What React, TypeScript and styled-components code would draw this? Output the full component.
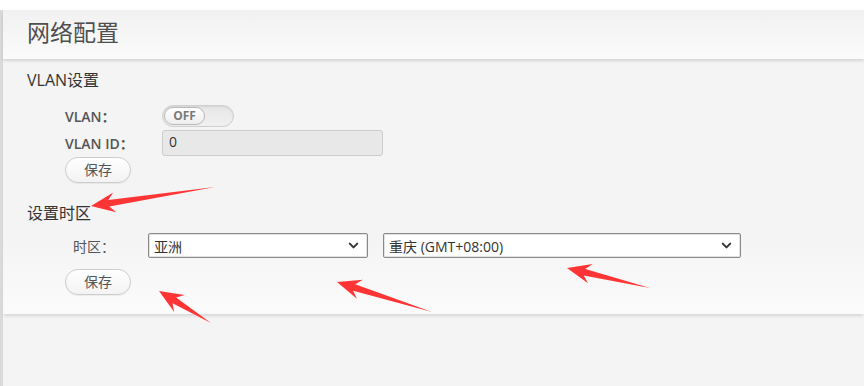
import { ChevronDown } from 'lucide-react';
import styled, { createGlobalStyle } from 'styled-components';

const GlobalStyle = createGlobalStyle`
  html, body {
    margin: 0;
    padding: 0;
    background: #f4f4f4;
  }
  * {
    box-sizing: border-box;
  }
`;

type ArrowSpec = {
  tip: [number, number];
  tail: [number, number];
};

// red annotation arrows drawn over the screenshot
const ARROWS: ArrowSpec[] = [
  { tip: [91, 206], tail: [215, 187] },
  { tip: [159, 291], tail: [211, 323] },
  { tip: [337, 282], tail: [432, 312] },
  { tip: [567, 268], tail: [650, 288] },
];

const arrowPoints = ({ tip, tail }: ArrowSpec) => {
  const dx = tip[0] - tail[0];
  const dy = tip[1] - tail[1];
  const len = Math.hypot(dx, dy);
  const ux = dx / len;
  const uy = dy / len;
  const nx = -uy;
  const ny = ux;
  const headLen = 22;
  const headW = 10;
  const shaftW = 3.4;
  const bx = tip[0] - ux * headLen;
  const by = tip[1] - uy * headLen;
  const pts = [
    [tail[0], tail[1]],
    [bx + ux * 4 + nx * shaftW, by + uy * 4 + ny * shaftW],
    [bx - ux * 2 + nx * headW, by - uy * 2 + ny * headW],
    [tip[0], tip[1]],
    [bx - ux * 2 - nx * headW, by - uy * 2 - ny * headW],
    [bx + ux * 4 - nx * shaftW, by + uy * 4 - ny * shaftW],
  ];
  return pts.map((p) => `${p[0].toFixed(1)},${p[1].toFixed(1)}`).join(' ');
};

export default function App() {
  return (
    <Page>
      <GlobalStyle />
      <TopStrip />
      <Frame>
        <Header>网络配置</Header>
        <Card>
          <SectionTitle>VLAN设置</SectionTitle>
          <FormBlock $indent={62}>
            <FieldRow $gap={3}>
              <Label $width={97} $bold>VLAN：</Label>
              <Toggle>
                <ToggleKnob>OFF</ToggleKnob>
              </Toggle>
            </FieldRow>
            <FieldRow $gap={1}>
              <Label $width={97} $bold>VLAN ID：</Label>
              <TextBox>0</TextBox>
            </FieldRow>
            <SaveButton>保存</SaveButton>
          </FormBlock>

          <SectionTitle $top={20}>设置时区</SectionTitle>
          <FormBlock $indent={62}>
            <FieldRow $gap={11} $top={10}>
              <Label $width={83} $align="right">时区：</Label>
              <SelectBox $width={220}>
                <span>亚洲</span>
                <ChevronDown size={15} strokeWidth={3.2} color="#333" />
              </SelectBox>
              <SelectBox $width={358} $left={15}>
                <span>重庆 (GMT+08:00)</span>
                <ChevronDown size={15} strokeWidth={3.2} color="#333" />
              </SelectBox>
            </FieldRow>
            <SaveButton>保存</SaveButton>
          </FormBlock>
        </Card>
      </Frame>
      <Annotations viewBox="0 0 864 386">
        {ARROWS.map((a, i) => (
          <polygon key={i} points={arrowPoints(a)} fill="#ff3434" />
        ))}
      </Annotations>
    </Page>
  );
}

const Page = styled.div`
  position: relative;
  display: flex;
  flex-direction: column;
  min-height: 100vh;
  font-family: 'Open Sans', 'Noto Sans CJK SC', sans-serif;
`;

const TopStrip = styled.div`
  height: 10px;
  background: #ffffff;
`;

const Frame = styled.div`
  flex: 1;
  border-left: 3px solid #dadada;
  background: #f4f4f4;
`;

const Header = styled.div`
  position: relative;
  z-index: 1;
  height: 49px;
  padding: 7px 0 0 24px;
  font-size: 23px;
  line-height: 30px;
  color: #4f4f4f;
  background: linear-gradient(#f1f1f1, #fbfbfb);
  box-shadow: 0 2px 3px rgba(0, 0, 0, 0.13);
`;

const Card = styled.div`
  padding: 11px 0 19px 24px;
  background: linear-gradient(#f4f4f4 0%, #f4f4f4 70%, #fbfbfb 100%);
  box-shadow: 0 3px 3px -1px rgba(0, 0, 0, 0.12);
`;

const SectionTitle = styled.div<{ $top?: number }>`
  margin-top: ${(p) => p.$top ?? 0}px;
  font-size: 16px;
  line-height: 20px;
  color: #333;
`;

const FormBlock = styled.div<{ $indent: number }>`
  display: flex;
  flex-direction: column;
  align-items: flex-start;
  margin-left: ${(p) => p.$indent - 24}px;
  padding-top: 15px;
`;

const FieldRow = styled.div<{ $gap: number; $top?: number }>`
  display: flex;
  align-items: center;
  margin-bottom: ${(p) => p.$gap}px;
  margin-top: ${(p) => (p.$top !== undefined ? p.$top - 15 : 0)}px;
`;

const Label = styled.div<{ $width: number; $bold?: boolean; $align?: string }>`
  width: ${(p) => p.$width}px;
  padding-right: ${(p) => (p.$align === 'right' ? 33 : 0)}px;
  text-align: ${(p) => p.$align ?? 'left'};
  font-size: 14px;
  font-weight: ${(p) => (p.$bold ? 600 : 400)};
  color: #555;
  white-space: nowrap;
`;

const Toggle = styled.div`
  width: 72px;
  height: 22px;
  padding: 1px;
  border: 1px solid #cfcfcf;
  border-radius: 11px;
  background: linear-gradient(#e6e6e6, #f0f0f0);
  box-shadow: inset 0 1px 2px rgba(0, 0, 0, 0.08);
`;

const ToggleKnob = styled.div`
  width: 41px;
  height: 18px;
  border: 1px solid #b9b9b9;
  border-radius: 9px;
  background: linear-gradient(#ffffff, #eeeeee);
  font-size: 12px;
  font-weight: 700;
  line-height: 16px;
  text-align: center;
  color: #7a7a7a;
`;

const TextBox = styled.div`
  width: 221px;
  height: 26px;
  padding: 0 6px;
  border: 1px solid #cccccc;
  border-radius: 3px;
  background: #e8e8e8;
  font-size: 14px;
  line-height: 22px;
  color: #333;
`;

const SaveButton = styled.div`
  width: 66px;
  height: 26px;
  border: 1px solid #cdcdcd;
  border-radius: 13px;
  background: linear-gradient(#ffffff, #f3f3f3);
  box-shadow: 0 1px 1px rgba(0, 0, 0, 0.06);
  font-size: 14px;
  line-height: 24px;
  text-align: center;
  color: #555;
`;

const SelectBox = styled.div<{ $width: number; $left?: number }>`
  display: flex;
  align-items: center;
  justify-content: space-between;
  width: ${(p) => p.$width}px;
  height: 25px;
  margin-left: ${(p) => p.$left ?? 0}px;
  padding: 0 6px 0 5px;
  border: 1px solid #8a8a8a;
  border-radius: 2px;
  background: #ffffff;
  box-shadow: inset 0 0 0 1px #e2e2e2;
  font-size: 14px;
  color: #333;
`;

const Annotations = styled.svg`
  position: absolute;
  left: 0;
  top: 0;
  width: 864px;
  height: 386px;
  pointer-events: none;
`;
